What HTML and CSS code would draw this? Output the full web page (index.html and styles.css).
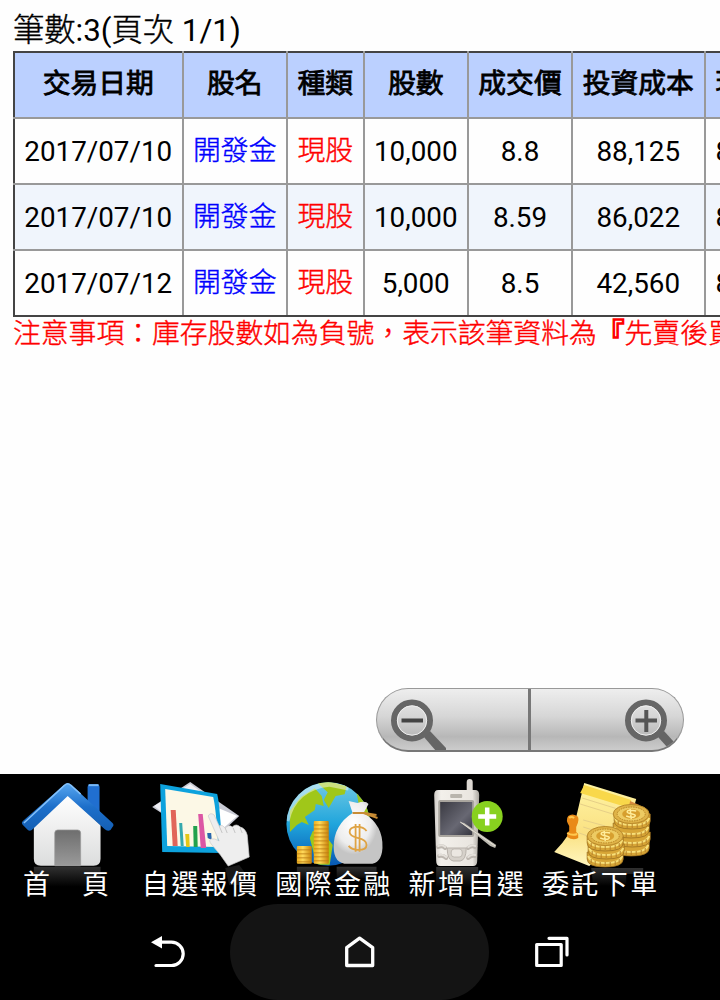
FILE: index.html
```html
<!doctype html>
<html lang="zh-Hant">
<head>
  <meta charset="utf-8">
  <title>庫存明細</title>
  <link rel="stylesheet" href="styles.css">
</head>
<body>
  <main>
    <p class="count"><span>筆數</span>:3(<span>頁次</span> 1/1)</p>
    <table>
      <colgroup>
        <col class="date"><col class="name"><col class="type"><col class="shares"><col class="price"><col class="cost"><col class="value">
      </colgroup>
      <thead>
        <tr><th>交易日期</th><th>股名</th><th>種類</th><th>股數</th><th>成交價</th><th>投資成本</th><th>現值</th></tr>
      </thead>
      <tbody>
        <tr><td>2017/07/10</td><td><a href="#">開發金</a></td><td><em>現股</em></td><td>10,000</td><td>8.8</td><td>88,125</td><td>85,600</td></tr>
        <tr><td>2017/07/10</td><td><a href="#">開發金</a></td><td><em>現股</em></td><td>10,000</td><td>8.59</td><td>86,022</td><td>85,600</td></tr>
        <tr><td>2017/07/12</td><td><a href="#">開發金</a></td><td><em>現股</em></td><td>5,000</td><td>8.5</td><td>42,560</td><td>85,600</td></tr>
      </tbody>
    </table>
    <p class="warning">注意事項：庫存股數如為負號，表示該筆資料為<b>『</b>先賣後買<b>』</b></p>

    <div class="zoom">
      <button class="zoom-out" aria-label="縮小">
        <svg width="60" height="60" viewBox="386 691 60 60">
          <path d="M424 737l6-6 17 18v2h-11z" fill="#656565"/>
          <circle cx="412" cy="720.5" r="18" fill="none" stroke="#666" stroke-width="6"/>
          <circle cx="412" cy="720.5" r="14.7" fill="none" stroke="#eee" stroke-width="1"/>
          <path d="M401.500 720.500h21.500" stroke="#444" stroke-width="4"/>
        </svg>
      </button>
      <button class="zoom-in" aria-label="放大">
        <svg width="60" height="60" viewBox="623 691 60 60">
          <path d="M658 737l6-6 10 11-6 6z" fill="#656565"/>
          <circle cx="646" cy="720.500" r="18" fill="none" stroke="#666" stroke-width="6"/>
          <circle cx="646" cy="720.500" r="14.700" fill="none" stroke="#eee" stroke-width="1"/>
          <path d="M635.500 720.500h21.500M646.300 710v22" stroke="#555" stroke-width="4"/>
        </svg>
      </button>
    </div>
  </main>

  <nav class="toolbar">
    <a href="#">
      <svg viewBox="0 774 134 95">
        <defs>
          <linearGradient id="roof" x1="0" y1="0" x2="0" y2="1"><stop offset="0" stop-color="#58a7f0"/><stop offset=".5" stop-color="#1d6fca"/><stop offset="1" stop-color="#145fb4"/></linearGradient>
          <linearGradient id="wall" x1="0" y1="0" x2="0" y2="1"><stop offset="0" stop-color="#fff"/><stop offset="1" stop-color="#dcdddd"/></linearGradient>
          <linearGradient id="door" x1="0" y1="0" x2="0" y2="1"><stop offset="0" stop-color="#6e6e6e"/><stop offset="1" stop-color="#9a9a9a"/></linearGradient>
          <linearGradient id="shade" x1="0" y1="0" x2="0" y2="1"><stop offset="0" stop-color="#303030"/><stop offset="1" stop-color="#000"/></linearGradient>
        </defs>
        <rect x="34" y="867" width="67" height="20" fill="url(#shade)"/>
        <path d="M88 806v-19q0-3 3-3h6q3 0 3 3v27z" fill="#206fd0"/>
        <path d="M89 785h10" stroke="#79b9f6" stroke-width="2"/>
        <path d="M68 794L34 825v34q0 7 7 7h53q7 0 7-7v-34z" fill="url(#wall)"/>
        <path d="M64 785q4-4 8 0l41 38q2 2 0 4l-2 3q-3 2-6-1L68 796 32 830q-3 2-5-1l-4-4q-2-2 0-4z" fill="url(#roof)"/>
        <path d="M24 823L65 785q3-3 6 0l10 9" fill="none" stroke="#83c0fa" stroke-width="1.500"/>
        <path d="M55 866v-33q0-3 3-3h20q3 0 3 3v33z" fill="url(#door)" stroke="#999" stroke-width=".7"/>
      </svg>
      <span>首　頁</span>
    </a>
    <a href="#">
      <svg viewBox="134 774 133 95">
        <path d="M226 868l14-3 6 8-4 12h-12z" fill="#181818"/>
        <path d="M153 807l38-25 49 34-30 28z" fill="#c9cbd5"/>
        <path d="M155 806l36-22 14 10-28 30z" fill="#f0f0f5"/>
        <path d="M219 808l19 8-16 14z" fill="#fff"/>
        <path d="M161 784l57 10q3 12 5 59l-60-1z" fill="#0da2dd"/>
        <path d="M166 789l48 8q3 12 5 50l-51-1z" fill="#fcf8e6"/>
        <path d="M171.500 810h5l2 36h-5z" fill="#e1655a"/>
        <path d="M180 823h3l1.500 23h-3z" fill="#35a9ae"/>
        <path d="M186 834h4l.5 13H187z" fill="#e5c716"/>
        <path d="M194 826h4l.5 21h-4z" fill="#21a14d"/>
        <path d="M199 814h4.500l3.500 34h-5.500z" fill="#dc57a4"/>
        <path d="M208 833h4l.5 7-4-2z" fill="#2967ad"/>
        <path d="M209 816q2-4 6-1l5 11q3-2 6 2 4-4 7-1 4-4 8 0 5 1 7 8l2 22-21 9q-7-11-17-22-3-4 0-5 3-1 8 2z" fill="#eee" stroke="#ccc" stroke-width=".7"/>
        <path d="M220 826l3 7m3-5l2 5m6-5l2 5m5-5l2 5" fill="none" stroke="#bbb" stroke-width=".8"/>
      </svg>
      <span>自選報價</span>
    </a>
    <a href="#">
      <svg viewBox="267 774 134 95">
        <defs>
          <linearGradient id="sea" x1="0" y1="0" x2="0" y2="1"><stop offset="0" stop-color="#70c9e4"/><stop offset=".5" stop-color="#20a5dc"/><stop offset="1" stop-color="#0758b4"/></linearGradient>
          <radialGradient id="bag" cx=".4" cy=".35"><stop offset="0" stop-color="#fff"/><stop offset=".7" stop-color="#ededed"/><stop offset="1" stop-color="#c5c5c5"/></radialGradient>
          <linearGradient id="gold" x1="0" x2="1"><stop offset="0" stop-color="#edae1f"/><stop offset=".4" stop-color="#ffd95b"/><stop offset="1" stop-color="#c88108"/></linearGradient>
          <clipPath id="globe"><circle cx="328.500" cy="824" r="42"/></clipPath>
        </defs>
        <path d="M297 867h32v15h-32zM337 867h40v11h-40z" fill="url(#shade)"/>
        <circle cx="328.500" cy="824" r="42" fill="url(#sea)"/>
        <g clip-path="url(#globe)">
          <path d="M290 811l11-14 14-9 7 8 2 10-8-2-1 6-10 7 4 8-7-3-5 3-7 7zM318 783l11-2 18 5-2 8-9 2-7 12-5-8 4-8zM310 838l3-7 10 1 10 13-3 20h-13z" fill="#a0c719"/>
          <path d="M356 787l16 28v8l-12-14z" fill="#9bc41b"/>
          <path d="M287 821q7-33 42-37l20 4" fill="none" stroke="#fff" stroke-opacity=".45" stroke-width="5"/>
        </g>
        <rect x="297" y="846" width="15" height="18" rx="1" fill="url(#gold)"/>
        <rect x="314" y="821" width="15" height="43" rx="1" fill="url(#gold)"/>
        <path d="M297 850h15m-15 4h15m-15 4h15m-15 4h15M314 825h15m-15 4h15m-15 4h15m-15 4h15m-15 4h15m-15 4h15m-15 4h15m-15 4h15m-15 4h15m-15 4h15" stroke="#b97913" stroke-width=".8"/>
        <path d="M349 801l9 2q8-3 11 1l-5 9q20 12 19 35-1 16-13 16h-22q-14 0-14-17 0-22 19-34z" fill="url(#bag)"/>
        <path d="M353 813h12l12 2m-13-2l14 5" fill="none" stroke="#c88c34" stroke-width="2"/>
        <path d="M367 831q-3-4-9-4-8 0-8 5 0 4 8 6 9 2 9 7 0 5-8 5-7 0-10-4M356 824v28m4-28v28" fill="none" stroke="#dfa343" stroke-width="1.800"/>
      </svg>
      <span>國際金融</span>
    </a>
    <a href="#">
      <svg viewBox="401 774 133 95">
        <defs>
          <linearGradient id="screen" x1="0" y1="0" x2="1" y2="1"><stop offset="0" stop-color="#3a3a42"/><stop offset=".6" stop-color="#686873"/><stop offset="1" stop-color="#34343e"/></linearGradient>
          <linearGradient id="case" x1="0" x2="1"><stop offset="0" stop-color="#d0ccc7"/><stop offset=".15" stop-color="#f3f0eb"/><stop offset=".85" stop-color="#e9e5df"/><stop offset="1" stop-color="#aaa69f"/></linearGradient>
        </defs>
        <path d="M437 867h42v20h-42z" fill="url(#shade)"/>
        <rect x="467.500" y="779" width="6" height="18" rx="3" fill="#ddd8d2"/>
        <path d="M439 790h37q4 0 4 5l-2 66q0 5-4 5h-33q-4 0-4-5l-2-66q0-5 4-5z" fill="url(#case)"/>
        <rect x="451" y="794" width="12" height="4" rx="1" fill="#b9b5ad"/>
        <rect x="439" y="800" width="36" height="37" rx="2" fill="#aaa69f"/>
        <rect x="441" y="802" width="32" height="33" fill="url(#screen)"/>
        <path d="M448 848h19q0 12-6 13h-7q-6-1-6-13z" fill="#d6d1ca" stroke="#b8b2ab"/>
        <rect x="452" y="849" width="11" height="8" rx="3" fill="#ebe7e1" stroke="#b8b2ab" stroke-width=".8"/>
        <path d="M439 847q4-2 7 1M440 856q4-1 7 2m22-10q4-3 7-1m-7 11q3-3 7-2" fill="none" stroke="#bdb7b0" stroke-width="4" stroke-linecap="round"/>
        <path d="M439 846q4-2 7 1M440 855q4-1 7 2m22-10q4-3 7-1m-7 11q3-3 7-2" fill="none" stroke="#e4e0da" stroke-width="2" stroke-linecap="round"/>
        <circle cx="488" cy="816.500" r="15.500" fill="#88d11f"/>
        <path d="M479 816.500h18M488 807.500v18" stroke="#fff" stroke-width="4.500"/>
        <path d="M461 822l4 1 32 22-1 3-5-2z" fill="#bcb9b0"/>
        <path d="M461 822l35 24" stroke="#e8e3d8"/>
      </svg>
      <span>新增自選</span>
    </a>
    <a href="#">
      <svg viewBox="534 774 133 95">
        <defs>
          <linearGradient id="paper" x1="0" y1="0" x2="0" y2="1"><stop offset="0" stop-color="#fff4a4"/><stop offset=".6" stop-color="#fae183"/><stop offset="1" stop-color="#fff6be"/></linearGradient>
          <g id="coin">
            <path d="M-18 0v7q0 8 18 8t18-8V0z" fill="#d7a536" stroke="#9c701f" stroke-width=".8"/>
            <path d="M-17 4q2 7 17 7t17-7" fill="none" stroke="#f7df79" stroke-width="2"/>
            <path d="M-14 7v4m4-2v4m5-3v4m5-4v4m5-4v4m5-5v4m4-6v4" stroke="#b5822a" stroke-width="1"/>
          </g>
          <g id="coin-face">
            <ellipse rx="18" ry="9.500" fill="#dfb348" stroke="#b98a2c"/>
            <ellipse rx="14" ry="7" fill="#edcb62" stroke="#ad791c" stroke-width=".8" stroke-dasharray="1.500 1"/>
            <ellipse rx="9" ry="5" fill="#d79f2e"/>
            <path d="M5-3q-9-2-9 1 0 1 5 2 5 1 2 3-3 1-8-1M-1-5l1 10" fill="none" stroke="#ffed9b" stroke-width="1.500"/>
          </g>
        </defs>
        <path d="M591 868h52v6h-17v12h-33z" fill="url(#shade)"/>
        <path d="M584 783l52 16-10 36-37 31-35-14q17-17 22-35z" fill="url(#paper)"/>
        <path d="M584 785l47 15-2 8-49-15z" fill="#f9d84a"/>
        <path d="M582 798l42 13m-44-7l39 12m-36 4l22 6m-22 1l22 7m-26-1l20 7" stroke="#e6cf88" stroke-width="1"/>
        <path d="M630 801l9 4-3 8-8-4z" fill="#d78a3d"/>
        <path d="M568 816q4-3 9 0 3 3-1 11v5l2 2v4q-5 3-11-1v-4l2-2v-5q-4-6-1-10z" fill="#e98a17"/>
        <path d="M569 818q2-2 5 0M567 833q5 3 10 1" fill="none" stroke="#ffc94f" stroke-width="2"/>
        <use href="#coin" x="631" y="841"/><use href="#coin" x="632" y="832"/><use href="#coin" x="631" y="823"/><use href="#coin" x="632" y="814"/><use href="#coin-face" x="631" y="814"/>
        <g transform="translate(605 836)"><use href="#coin" y="16"/><use href="#coin" x="1" y="8"/><use href="#coin" y="0"/><use href="#coin-face"/></g>
      </svg>
      <span>委託下單</span>
    </a>
  </nav>

  <footer class="system">
    <a href="#" aria-label="返回">
      <svg width="36" height="34" viewBox="150 935 36 34">
        <path d="M156 965.500h15.500a11.700 11.700 0 0 0 0-23.400H160" fill="none" stroke="#fff" stroke-width="3.200" stroke-linecap="round"/>
        <path d="M151 942.300l11-6.300v12.600z" fill="#fff"/>
      </svg>
    </a>
    <a href="#" class="home" aria-label="主畫面">
      <svg width="34" height="34" viewBox="343 935 34 34">
        <path d="M346.700 965.500v-17.800l12.900-9.500 13.100 9.500v17.800z" fill="none" stroke="#fff" stroke-width="3.300" stroke-linejoin="round"/>
      </svg>
    </a>
    <a href="#" aria-label="最近">
      <svg width="36" height="34" viewBox="533 935 36 34">
        <path d="M536.700 944.500h24.500v21h-24.500zM549 938.300h18V955" fill="none" stroke="#fff" stroke-width="3.200" stroke-linejoin="round" stroke-linecap="round"/>
      </svg>
    </a>
  </footer>
</body>
</html>
```

FILE: styles.css
```css
body {
  width: 720px;
  height: 1000px;
  margin: 0;
  overflow: hidden;
  background: #000;
  color: #000;
  font: 27.8px/32px Roboto, "Noto Sans CJK TC", sans-serif;
}

main {
  position: relative;
  box-sizing: border-box;
  height: 774px;
  padding: 10px 0 0 13px;
  overflow: hidden;
  background: #fefefe;
}

p {
  margin: 0;
  white-space: nowrap;
}
.count {
  height: 41px;
  font-size: 31.3px;
  line-height: 42px;
}

/* between light and regular */
.count span, td a, td em, .warning {
  font-weight: 300;
  -webkit-text-stroke: .4px currentColor;
}

table {
  width: 860px;
  table-layout: fixed;
  border-collapse: collapse;
  border: 2px solid #444;
}
.date { width: 168.5px; }
.name { width: 104.5px; }
.type { width: 76.5px; }
.shares { width: 104.5px; }
.price { width: 104px; }
.cost { width: 132.5px; }

th, td {
  box-sizing: border-box;
  height: 66px;
  padding: 2px 0 0;
  border: 2px solid #999;
  text-align: center;
  white-space: nowrap;
}
thead th {
  padding: 0 0 2px;
  border-top-color: #444;
  background: #bbd0ff;
  font-weight: 400;
  -webkit-text-stroke: .8px #000;
}
th:first-child, td:first-child { border-left-color: #444; }
tr:last-child td { border-bottom-color: #444; }
tbody tr:nth-child(even) { background: #f0f5fc; }
/* last column runs off the screen */
th:last-child, td:last-child {
  padding-left: 10px;
  text-align: left;
}
thead th:first-child { border-left-color: #444; }
thead tr:last-child th { border-bottom-color: #999; }

td a, td em {
  position: relative;
  top: -1px;
}
td a {
  color: #00f;
  text-decoration: none;
}
td em {
  color: red;
  font-style: normal;
}
.warning {
  padding-top: 1px;
  color: red;
}
.warning b {
  font-weight: 400;
  -webkit-text-stroke: 1.5px currentColor;
}

.zoom {
  position: absolute;
  top: 688px;
  left: 376px;
  display: flex;
  box-sizing: border-box;
  width: 308px;
  height: 64px;
  overflow: hidden;
  border: 1px solid #999;
  border-bottom: 2px solid #777;
  border-radius: 32px;
  background: linear-gradient(#eee, #d6d6d6 45%, #b7b7b7 78%, #ccc);
}
.zoom button {
  display: flex;
  box-sizing: border-box;
  width: 151px;
  padding: 2px 9px 0;
  border: 0;
  background: none;
}
.zoom .zoom-in {
  justify-content: flex-end;
  width: 155px;
  padding-right: 0;
  border-left: 3px solid #777;
}

.toolbar {
  display: flex;
  height: 130px;
}
.toolbar a {
  width: 133.4px;
  color: #fff;
  font-size: 27px;
  letter-spacing: 2.4px;
  line-height: 28px;
  text-align: center;
  text-decoration: none;
  white-space: nowrap;
}
.toolbar svg {
  display: block;
  width: 133.4px;
  height: 95px;
  overflow: visible;
}
.toolbar span {
  position: relative;
  display: block;
  padding: 2px 0 0 1px;
}

.system {
  display: flex;
  justify-content: center;
  height: 96px;
  margin-right: 1px;
}
.system a {
  display: flex;
  align-items: center;
  justify-content: center;
  width: 124px;
}
.system .home {
  width: 259px;
  border-radius: 48px;
  background: #141414;
}
```
